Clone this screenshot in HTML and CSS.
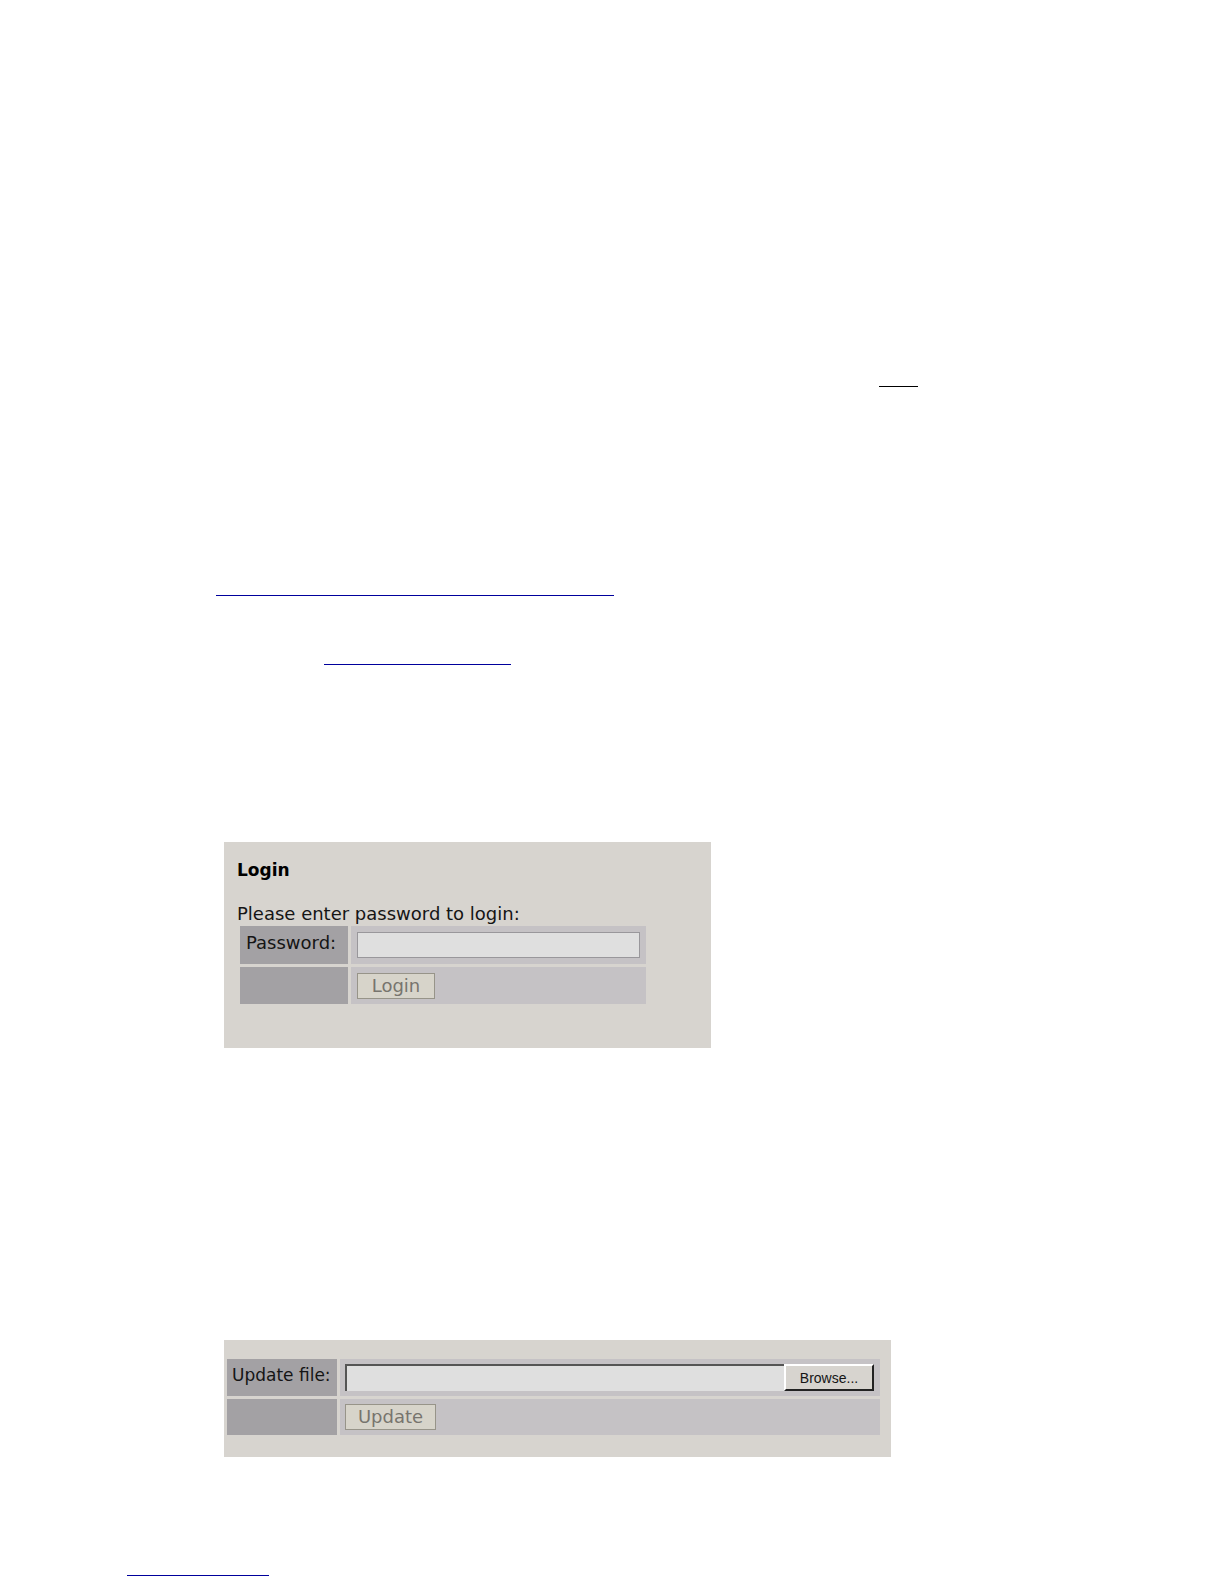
FILE: index.html
```html
<!DOCTYPE html>
<html lang="en">
<head>
<meta charset="utf-8">
<meta name="viewport" content="width=device-width, initial-scale=1">
<title>Login and update</title>
<link rel="stylesheet" href="styles.css">
</head>
<body>
<main class="page">
  <hr class="rule note-rule">
  <a class="rule guide-link" href="#login" aria-label="Login"></a>
  <a class="rule site-link" href="#update" aria-label="Update"></a>

  <form class="panel login-panel" id="login">
    <h1 class="title">Login</h1>
    <p class="prompt">Please enter password to login:</p>
    <div class="fields">
      <div class="name"><label for="password">Password:</label></div>
      <div class="value"><input class="field" id="password" type="password"></div>
      <div class="name"></div>
      <div class="value"><button class="action" type="button">Login</button></div>
    </div>
  </form>

  <form class="panel update-panel" id="update">
    <div class="fields update-fields">
      <div class="name"><label for="file">Update file:</label></div>
      <div class="value">
        <input class="field file-field" id="file" type="text">
        <button class="browse" type="button">Browse...</button>
      </div>
      <div class="name"></div>
      <div class="value"><button class="action update-action" type="button">Update</button></div>
    </div>
  </form>
</main>
<footer class="footer">
  <a class="rule footer-link" href="#login" aria-label="Back to top"></a>
</footer>
</body>
</html>
```
FILE: styles.css
```css
* {
  box-sizing: border-box;
}

body {
  margin: 0;
  background: #fff;
  color: #151515;
  font: 18px/22px "DejaVu Sans", Verdana, sans-serif;
}

.page {
  display: flex;
  flex-direction: column;
  align-items: flex-start;
  padding: 386px 224px 0;
}

.rule {
  display: block;
  height: 1px;
  margin: 0;
  border: 0;
  background: #00009c;
}

.note-rule {
  align-self: flex-end;
  width: 39px;
  margin-right: 82px;
  background: #000;
}

.guide-link {
  width: 398px;
  margin: 208px 0 0 -8px;
}

.site-link {
  width: 187px;
  margin: 68px 0 0 100px;
}

.panel {
  background: #d7d4cf;
}

.login-panel {
  width: 100%;
  max-width: 487px;
  margin-top: 177px;
  padding: 17px 65px 44px 13px;
}

.title {
  margin: 0;
  font-size: 17px;
  line-height: 22px;
  color: #000;
}

.prompt {
  margin: 22px 0 1px;
}

.fields {
  display: grid;
  grid-template-columns: 108px 1fr;
  grid-template-rows: 38px 37px;
  gap: 3px;
  margin-left: 3px;
}

.name {
  padding: 6px;
  background: #a3a1a4;
  white-space: nowrap;
}

.value {
  display: flex;
  align-items: center;
  padding: 0 6px;
  background: #c5c2c5;
}

.field {
  flex: 1;
  min-width: 0;
  height: 26px;
  margin: 0;
  padding: 0 4px;
  border: 1px solid #99979b;
  border-radius: 0;
  background: #dfdfdf;
  font: inherit;
}

.action {
  width: 78px;
  height: 26px;
  padding: 0;
  border: 1px solid #979489;
  border-radius: 0;
  background: #d7d4ca;
  color: #77746e;
  font: inherit;
}

.update-panel {
  width: 100%;
  max-width: 667px;
  margin-top: 292px;
  padding: 19px 11px 22px 0;
}

.update-fields {
  grid-template-columns: 110px 1fr;
  grid-template-rows: 37px 36px;
}

.update-fields .name {
  padding: 5px;
  font-size: 17px;
}

.update-fields .value {
  padding: 0 6px 0 5px;
}

.file-field {
  height: 27px;
  border-width: 2px 0 0 2px;
  border-color: #555;
}

.browse {
  width: 90px;
  height: 27px;
  padding: 0;
  border: 2px solid;
  border-color: #fff #222 #222 #fff;
  background: #d7d4cf;
  color: #151515;
  font: 14px/20px "Liberation Sans", Arial, sans-serif;
}

.update-action {
  width: 91px;
}

.footer {
  padding: 118px 127px 8px;
}

.footer-link {
  width: 142px;
}
```
